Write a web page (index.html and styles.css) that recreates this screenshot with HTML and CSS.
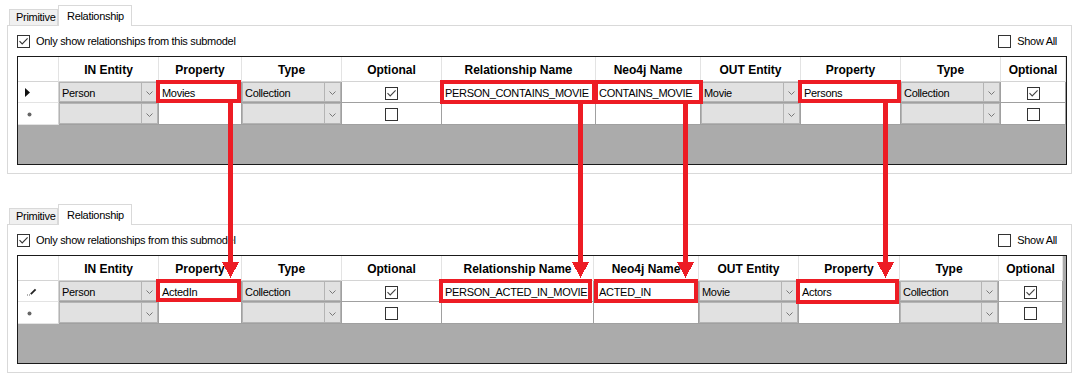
FILE: index.html
```html
<!DOCTYPE html>
<html>
<head>
<meta charset="utf-8">
<link rel="stylesheet" href="styles.css">
</head>
<body>
<div class="page">

  <section class="tabctl">
    <div class="tabs">
      <div class="tab">Primitive</div>
      <div class="tab active">Relationship</div>
    </div>
    <div class="tabpage">
      <div class="opts">
        <label class="chk"><span class="box"><svg width="11" height="11" viewBox="0 0 11 11"><path d="M1.5 5.2 L4.2 8 L9.6 2.4" fill="none" stroke="#333" stroke-width="1.1"/></svg></span>Only show relationships from this submodel</label>
        <label class="chk"><span class="box"></span>Show All</label>
      </div>
      <div class="grid g1">
        <div class="h corner"></div>
        <div class="h">IN Entity</div>
        <div class="h">Property</div>
        <div class="h">Type</div>
        <div class="h">Optional</div>
        <div class="h">Relationship Name</div>
        <div class="h">Neo4j Name</div>
        <div class="h">OUT Entity</div>
        <div class="h">Property</div>
        <div class="h">Type</div>
        <div class="h">Optional</div>

        <div class="c rh"><svg width="5" height="9" viewBox="0 0 5 9"><polygon points="0,0 5,4.5 0,9" fill="#111"/></svg></div>
        <div class="c cmb"><div class="cb"><span class="cv">Person</span><span class="cd"><svg width="7" height="4" viewBox="0 0 7 4"><path d="M0.5 0.5 L3.5 3.5 L6.5 0.5" fill="none" stroke="#777" stroke-width="1"/></svg></span></div></div>
        <div class="c txt mark mk-movies">Movies</div>
        <div class="c cmb"><div class="cb"><span class="cv">Collection</span><span class="cd"><svg width="7" height="4" viewBox="0 0 7 4"><path d="M0.5 0.5 L3.5 3.5 L6.5 0.5" fill="none" stroke="#777" stroke-width="1"/></svg></span></div></div>
        <div class="c ck"><span class="box"><svg width="11" height="11" viewBox="0 0 11 11"><path d="M1.5 5.2 L4.2 8 L9.6 2.4" fill="none" stroke="#444" stroke-width="1.1"/></svg></span></div>
        <div class="c txt mark mk-rel1">PERSON_CONTAINS_MOVIE</div>
        <div class="c txt mark mk-neo1">CONTAINS_MOVIE</div>
        <div class="c cmb"><div class="cb"><span class="cv">Movie</span><span class="cd"><svg width="7" height="4" viewBox="0 0 7 4"><path d="M0.5 0.5 L3.5 3.5 L6.5 0.5" fill="none" stroke="#777" stroke-width="1"/></svg></span></div></div>
        <div class="c txt mark mk-pers">Persons</div>
        <div class="c cmb"><div class="cb"><span class="cv">Collection</span><span class="cd"><svg width="7" height="4" viewBox="0 0 7 4"><path d="M0.5 0.5 L3.5 3.5 L6.5 0.5" fill="none" stroke="#777" stroke-width="1"/></svg></span></div></div>
        <div class="c ck"><span class="box"><svg width="11" height="11" viewBox="0 0 11 11"><path d="M1.5 5.2 L4.2 8 L9.6 2.4" fill="none" stroke="#444" stroke-width="1.1"/></svg></span></div>

        <div class="c rh rh-new"><svg width="5" height="5" viewBox="0 0 5 5"><circle cx="2.5" cy="2.5" r="2" fill="#666"/></svg></div>
        <div class="c cmb"><div class="cb"><span class="cv"></span><span class="cd"><svg width="7" height="4" viewBox="0 0 7 4"><path d="M0.5 0.5 L3.5 3.5 L6.5 0.5" fill="none" stroke="#777" stroke-width="1"/></svg></span></div></div>
        <div class="c txt"></div>
        <div class="c cmb"><div class="cb"><span class="cv"></span><span class="cd"><svg width="7" height="4" viewBox="0 0 7 4"><path d="M0.5 0.5 L3.5 3.5 L6.5 0.5" fill="none" stroke="#777" stroke-width="1"/></svg></span></div></div>
        <div class="c ck"><span class="box"></span></div>
        <div class="c txt"></div>
        <div class="c txt"></div>
        <div class="c cmb"><div class="cb"><span class="cv"></span><span class="cd"><svg width="7" height="4" viewBox="0 0 7 4"><path d="M0.5 0.5 L3.5 3.5 L6.5 0.5" fill="none" stroke="#777" stroke-width="1"/></svg></span></div></div>
        <div class="c txt"></div>
        <div class="c cmb"><div class="cb"><span class="cv"></span><span class="cd"><svg width="7" height="4" viewBox="0 0 7 4"><path d="M0.5 0.5 L3.5 3.5 L6.5 0.5" fill="none" stroke="#777" stroke-width="1"/></svg></span></div></div>
        <div class="c ck"><span class="box"></span></div>
      </div>
    </div>
  </section>

  <section class="tabctl">
    <div class="tabs">
      <div class="tab">Primitive</div>
      <div class="tab active">Relationship</div>
    </div>
    <div class="tabpage">
      <div class="opts">
        <label class="chk"><span class="box"><svg width="11" height="11" viewBox="0 0 11 11"><path d="M1.5 5.2 L4.2 8 L9.6 2.4" fill="none" stroke="#333" stroke-width="1.1"/></svg></span>Only show relationships from this submodel</label>
        <label class="chk"><span class="box"></span>Show All</label>
      </div>
      <div class="grid g2">
        <div class="h corner"></div>
        <div class="h">IN Entity</div>
        <div class="h">Property</div>
        <div class="h">Type</div>
        <div class="h">Optional</div>
        <div class="h">Relationship Name</div>
        <div class="h">Neo4j Name</div>
        <div class="h">OUT Entity</div>
        <div class="h">Property</div>
        <div class="h">Type</div>
        <div class="h">Optional</div>

        <div class="c rh rh-edit"><svg width="10" height="9" viewBox="0 0 10 9"><rect x="0" y="7.5" width="1" height="1" fill="#666"/><rect x="2" y="7.5" width="1" height="1" fill="#666"/><path d="M3.8 7.2 L8.6 2.4" stroke="#222" stroke-width="1.8"/></svg></div>
        <div class="c cmb"><div class="cb"><span class="cv">Person</span><span class="cd"><svg width="7" height="4" viewBox="0 0 7 4"><path d="M0.5 0.5 L3.5 3.5 L6.5 0.5" fill="none" stroke="#777" stroke-width="1"/></svg></span></div></div>
        <div class="c txt mark mk-acted">ActedIn</div>
        <div class="c cmb"><div class="cb"><span class="cv">Collection</span><span class="cd"><svg width="7" height="4" viewBox="0 0 7 4"><path d="M0.5 0.5 L3.5 3.5 L6.5 0.5" fill="none" stroke="#777" stroke-width="1"/></svg></span></div></div>
        <div class="c ck"><span class="box"><svg width="11" height="11" viewBox="0 0 11 11"><path d="M1.5 5.2 L4.2 8 L9.6 2.4" fill="none" stroke="#444" stroke-width="1.1"/></svg></span></div>
        <div class="c txt mark mk-rel2">PERSON_ACTED_IN_MOVIE</div>
        <div class="c txt mark mk-neo2">ACTED_IN</div>
        <div class="c cmb"><div class="cb"><span class="cv">Movie</span><span class="cd"><svg width="7" height="4" viewBox="0 0 7 4"><path d="M0.5 0.5 L3.5 3.5 L6.5 0.5" fill="none" stroke="#777" stroke-width="1"/></svg></span></div></div>
        <div class="c txt mark mk-actors">Actors</div>
        <div class="c cmb"><div class="cb"><span class="cv">Collection</span><span class="cd"><svg width="7" height="4" viewBox="0 0 7 4"><path d="M0.5 0.5 L3.5 3.5 L6.5 0.5" fill="none" stroke="#777" stroke-width="1"/></svg></span></div></div>
        <div class="c ck"><span class="box"><svg width="11" height="11" viewBox="0 0 11 11"><path d="M1.5 5.2 L4.2 8 L9.6 2.4" fill="none" stroke="#444" stroke-width="1.1"/></svg></span></div>

        <div class="c rh rh-new"><svg width="5" height="5" viewBox="0 0 5 5"><circle cx="2.5" cy="2.5" r="2" fill="#666"/></svg></div>
        <div class="c cmb"><div class="cb"><span class="cv"></span><span class="cd"><svg width="7" height="4" viewBox="0 0 7 4"><path d="M0.5 0.5 L3.5 3.5 L6.5 0.5" fill="none" stroke="#777" stroke-width="1"/></svg></span></div></div>
        <div class="c txt"></div>
        <div class="c cmb"><div class="cb"><span class="cv"></span><span class="cd"><svg width="7" height="4" viewBox="0 0 7 4"><path d="M0.5 0.5 L3.5 3.5 L6.5 0.5" fill="none" stroke="#777" stroke-width="1"/></svg></span></div></div>
        <div class="c ck"><span class="box"></span></div>
        <div class="c txt"></div>
        <div class="c txt"></div>
        <div class="c cmb"><div class="cb"><span class="cv"></span><span class="cd"><svg width="7" height="4" viewBox="0 0 7 4"><path d="M0.5 0.5 L3.5 3.5 L6.5 0.5" fill="none" stroke="#777" stroke-width="1"/></svg></span></div></div>
        <div class="c txt"></div>
        <div class="c cmb"><div class="cb"><span class="cv"></span><span class="cd"><svg width="7" height="4" viewBox="0 0 7 4"><path d="M0.5 0.5 L3.5 3.5 L6.5 0.5" fill="none" stroke="#777" stroke-width="1"/></svg></span></div></div>
        <div class="c ck"><span class="box"></span></div>
      </div>
    </div>
  </section>

  <svg class="arrows" width="1080" height="379" viewBox="0 0 1080 379" shape-rendering="crispEdges">
    <g fill="#ed1c24">
      <rect x="228" y="99" width="5" height="164"/>
      <polygon points="222,262 239,262 230.5,278"/>
      <rect x="578" y="103" width="5" height="160"/>
      <polygon points="572,262 589,262 580.5,278"/>
      <rect x="683" y="103" width="5" height="160"/>
      <polygon points="677,262 694,262 685.5,278"/>
      <rect x="883" y="102" width="5" height="161"/>
      <polygon points="877,262 894,262 885.5,278"/>
    </g>
  </svg>
</div>
</body>
</html>
```

FILE: styles.css
```css
* { box-sizing: border-box; }
html, body { margin: 0; padding: 0; background: #fff; }
body {
  font-family: "Liberation Sans", Arial, sans-serif;
  font-size: 11px;
  letter-spacing: -0.3px;
  color: #000;
}
.page {
  position: relative;
  width: 1080px;
  height: 379px;
  padding: 5px 0 0 7px;
  overflow: hidden;
}
.tabctl { width: 1065px; }
.tabctl + .tabctl { margin-top: 30px; }

.tabs {
  display: flex;
  align-items: flex-end;
  height: 20px;
  padding-left: 2px;
}
.tab {
  width: 49px;
  height: 16px;
  padding-left: 6px;
  border: 1px solid #d9d9d9;
  border-bottom: none;
  background: #f0f0f0;
  line-height: 14px;
  white-space: nowrap;
}
.tab.active {
  width: 74px;
  height: 21px;
  margin-bottom: -1px;
  padding-left: 8px;
  background: #fff;
  line-height: 20px;
  position: relative;
  z-index: 1;
}
.tabpage {
  height: 149px;
  border: 1px solid #d9d9d9;
  padding: 9px 4px 8px 9px;
}
.opts {
  display: flex;
  justify-content: space-between;
  align-items: center;
  height: 13px;
  margin-bottom: 8px;
  padding-right: 10px;
}
.chk {
  display: flex;
  align-items: center;
  gap: 6px;
  line-height: 13px;
  white-space: nowrap;
}
.box {
  width: 13px;
  height: 13px;
  border: 1px solid #333;
  background: #fff;
  display: block;
  flex: none;
}
.box svg { display: block; }

.grid {
  width: 1050px;
  height: 109px;
  border: 1px solid #1a1a1a;
  background: #ababab;
  display: grid;
  grid-template-rows: 25px 21px 22px;
  align-content: start;
}
.g1 { grid-template-columns: 41px 100px 83px 100px 100px 154px 105px 100px 100px 100px 65px; }
.g2 { grid-template-columns: 41px 100px 83px 100px 100px 152px 105px 100px 101px 99px 64px; }

.h {
  background: #fff;
  border-right: 1px solid #e3e3e3;
  border-bottom: 1px solid #d4d4d4;
  display: flex;
  align-items: center;
  justify-content: center;
  font-size: 12px;
  font-weight: bold;
  letter-spacing: 0;
  white-space: nowrap;
  padding-top: 1px;
}
.c {
  background: #fff;
  border-right: 1px solid #a0a0a0;
  border-bottom: 1px solid #a0a0a0;
  display: flex;
  align-items: center;
  white-space: nowrap;
  min-width: 0;
}
.rh {
  border-right-color: #d4d4d4;
  border-bottom-color: #e3e3e3;
  padding-left: 7px;
  padding-top: 1px;
}
.rh svg { display: block; }
.rh-new { padding-left: 9px; }
.rh-edit { padding-left: 9px; }

.txt { padding: 1px 0 0 3px; }
.ck { justify-content: center; padding-top: 2px; }

.cmb { padding: 0; align-items: stretch; }
.cb {
  flex: 1;
  display: flex;
  background: #e1e1e1;
  border: 1px solid #b4b4b4;
}
.cv {
  flex: 1;
  padding: 1px 0 0 2px;
  display: flex;
  align-items: center;
}
.cd {
  width: 16px;
  border-left: 1px solid #b4b4b4;
  display: flex;
  align-items: center;
  justify-content: center;
  padding-top: 2px;
}
.cd svg { display: block; }

.mark { position: relative; z-index: 2; }
.mark::after {
  content: "";
  position: absolute;
  inset: -2px 0 -2px -3px;
  border: 4px solid #ed1c24;
}
.mk-movies::after { inset: -2px 0 -1px -3px; }
.mk-rel1::after { inset: -2px -1px -2px -2px; }
.mk-neo1::after { inset: -2px -3px -2px -2px; }
.mk-pers::after { inset: -2px -1px -1px -3px; }
.mk-acted::after { inset: -2px 0 -1px -3px; }
.mk-rel2::after { inset: -2px 1px -2px -3px; }
.mk-neo2 { padding-left: 5px; }
.mk-neo2::after { inset: -2px 0 -2px 0; }
.mk-actors::after { inset: -2px 0 -3px -3px; }

.arrows {
  position: absolute;
  left: 0;
  top: 0;
  z-index: 10;
  pointer-events: none;
}
```
